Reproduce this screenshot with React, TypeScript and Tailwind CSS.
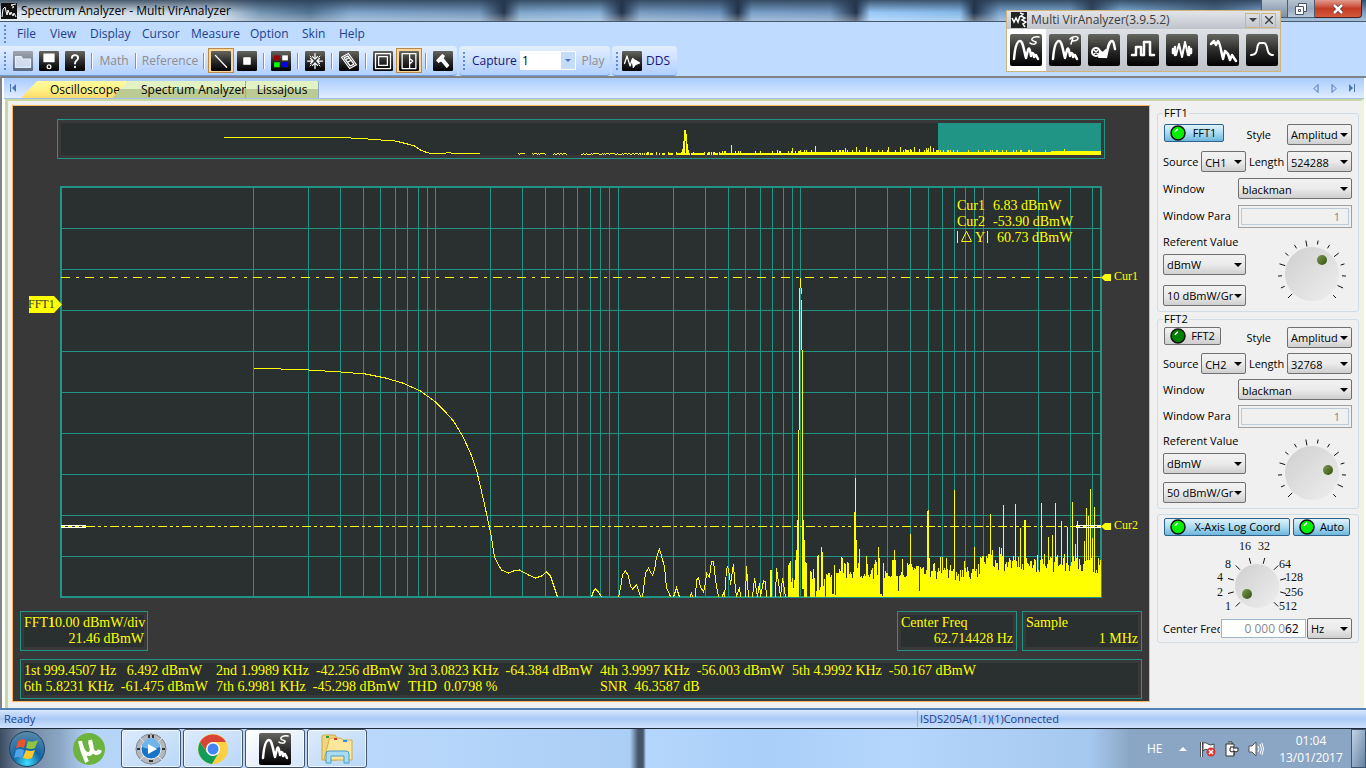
import { useState, type ReactNode } from "react";
import clsx from "clsx";

const TEAL = "#219585";
const YELLOW = "#ffff00";

/* ---------- Spectrum data ---------- */

const BASE = 597;
const LEFT = 61;
const RIGHT = 1101;

// log grid: decades start at 253 and are 182.4 wide
const gridX: number[] = [];
for (let decade = 0; decade < 5; decade++) {
  for (let m = 1; m < 10; m++) {
    const x = Math.round(253 + 182.4 * (decade + Math.log10(m)));
    if (x < RIGHT - 4) gridX.push(x);
  }
}
const gridY = [228, 269, 310, 351, 392, 433, 474, 515, 556];

const noise = (i: number) => {
  const v = Math.sin(i * 127.1 + 11.7) * 43758.5453;
  return v - Math.floor(v);
};

const spikes: Record<number, number> = {
  806: 563, 810: 571, 811: 572, 817: 556, 818: 555, 821: 547, 822: 552, 828: 573, 834: 565,
  841: 557, 842: 558, 848: 563, 854: 512, 855: 478, 856: 540, 859: 549, 866: 556, 867: 564,
  876: 562, 878: 547, 879: 558, 883: 563, 894: 550, 895: 560, 902: 559, 907: 563, 910: 534,
  927: 511, 928: 510, 929: 558, 940: 557, 942: 557, 946: 558, 953: 569, 954: 490, 964: 561,
  974: 547, 981: 558, 983: 556, 986: 556, 990: 514, 991: 555, 992: 550, 999: 547, 1001: 548,
  1003: 505, 1009: 558, 1013: 556, 1015: 504, 1020: 528, 1024: 520, 1025: 520, 1031: 561,
  1037: 555, 1041: 503, 1044: 554, 1048: 537, 1052: 535, 1055: 503, 1057: 555, 1061: 521,
  1064: 554, 1067: 527, 1072: 502, 1075: 544, 1077: 521, 1084: 541, 1086: 508, 1088: 516,
  1090: 489, 1092: 538, 1094: 507, 1098: 558,
};

const noiseTop = (x: number) => {
  if (spikes[x]) return spikes[x];
  const r = noise(x);
  const slow = noise(Math.floor(x / 4) + 500);
  if (x < 826) return r < 0.3 ? BASE : BASE - 6 - 26 * slow * r;
  if (x < 885) return slow < 0.18 ? BASE - 4 * r : BASE - 18 - 22 * slow * r;
  if (x < 925) return r < 0.08 ? BASE - 6 : BASE - 15 - 20 * slow - 4 * r;
  if (x < 980) return BASE - 13 - 16 * r - 8 * slow;
  return BASE - 22 - 10 * slow - 12 * r;
};

let noisePath = "";
for (let x = 806; x < RIGHT; x++) {
  noisePath += `M${x} ${BASE}V${Math.round(noiseTop(x))}`;
}

const miniSpikes: Record<number, number> = {
  731: 145, 777: 150, 792: 148, 815: 146, 845: 148, 856: 147, 866: 147, 870: 149, 888: 147,
  900: 147, 905: 149, 910: 149, 914: 147, 919: 149, 926: 148, 928: 148, 930: 146, 933: 148,
  1064: 149,
};
let miniPath = "";
for (let x = 508; x < RIGHT; x++) {
  const r = noise(x * 3);
  let top = 153;
  if (x < 640) top = noise(Math.floor(x / 7)) < 0.45 ? 155 : 153 + (r > 0.6 ? 1 : 0);
  else if (x < 720) top = r < 0.3 ? 154 : 153 - (r > 0.8 ? 1 : 0);
  else if (x < 800) top = r > 0.8 ? 151 : 153;
  else top = r > 0.8 ? 150 : 152;
  if (x > 1050) top = 151;
  if (miniSpikes[x]) top = miniSpikes[x];
  if (x < 640) {
    if (top < 155) miniPath += `M${x} ${top}v1`;
  } else if (top < 154 || x > 720) {
    miniPath += `M${x} 155V${top}`;
  }
}

const curve =
  "M253 368L280 369L308 370L340 372L365 374L385 378L402 383L420 391L435 402L445 412L453 421L462 436L470 453L476 470L483 500L490 532L494 557L497 563L501 570L508 573L513 571L519 570L528 575L535 578L541 576L546 572L550 576L554 588L557 597" +
  "M591 597L593 591L595 589L598 592L601 597" +
  "M618 597L620 588L622 575L625 571L628 576L630 586L632 589L636 585L638 590L640 597" +
  "M642 597L645 573L648 568L650 572L652 575L654 570L656 557L659 549L661 556L664 567L666 588L669 594L670 597" +
  "M673 597L676 588L679 597M690 597L691 592L692 597" +
  "M695 597L696 580L698 578L700 587L703 592L705 583L706 573L709 577L711 561L713 561L715 580L718 597" +
  "M722 597L723 592L724 597L726 570L727 566L729 575L730 585L731 577L733 564L734 580L736 597L739 587L740 597" +
  "M745 597L746 566L748 597M752 597L754 578L757 597L759 583L760 597L763 581L765 582L766 597" +
  "M770 597V570M771 597V570M775 597L776 568L778 582L780 597L782 578L784 590L785 597";

const peak =
  "M788 597V565M789 597V563M790 597V561M791 597V582M792 597V578M793 597V588M794 597V580M795 597V560M796 597V550M797 597V520M798 597V430M799 430V288M800 288V278M801 288V294M801 300V350M802 350V589M803 589V520M804 597V540M805 597V562";

const Plot = () => (
  <svg
    viewBox="13 106 1136 500"
    className="block w-full h-auto font-['Liberation_Serif',serif]"
    role="img"
    aria-label="Spectrum"
  >
    <g shapeRendering="crispEdges">
      {/* Overview strip */}
      <rect x="57.5" y="119.5" width="1047" height="39" fill="none" stroke={TEAL} />
      <rect x="61" y="123" width="1040" height="32" fill="#2a3030" />
      <rect x="938" y="123" width="163" height="32" fill={TEAL} />
      <g transform="translate(.5 0)" fill="none" stroke={YELLOW}>
        <path d="M223 137.5H350M350 138.500H367M367 139.500H380M380 140.500H392L399 142L407 144L414 146L420 150L425 152L430 153.500H445M445 152.500H450M450 153.500H479" />
        <path d={miniPath} />
        <path d="M682 155V149M683 155V141M684 155V130M685 141V130M686 155V134M687 155V144M688 155V150" />
      </g>

      {/* Grid */}
      <rect x={LEFT} y="187" width="1040" height="410" fill="#2a3030" />
      <g transform="translate(.5 .5)" stroke={TEAL}>
        {gridX.map((x) => (
          <line key={x} x1={x} x2={x} y1="187" y2={BASE} />
        ))}
        {gridY.map((y) => (
          <line key={y} x1={LEFT} x2={RIGHT} y1={y} y2={y} />
        ))}
      </g>
      <rect x="61" y="187" width="1040" height="410" fill="none" stroke={TEAL} strokeWidth="2" />

      {/* Traces */}
      <g transform="translate(.5 0)" fill="none" stroke={YELLOW}>
        <path d={curve} />
        <path d={peak} />
        <path d={noisePath} />
      </g>
      <path d="M788 597.500H1101" stroke={TEAL} />

      {/* Cursors */}
      <path d="M61 277.500H1101" stroke={YELLOW} strokeDasharray="9 6 3 6" />
      <path d="M86 526.500H1076" stroke={YELLOW} strokeDasharray="9 3 3 3 3 3" />
      <path d="M61 526.500H86M1076 526.500H1101" stroke={YELLOW} strokeDasharray="4 3" />
      <path d="M61 525.500H86M61 527.500H86M1076 525.500H1101M1076 527.500H1101" stroke="#fff" />
    </g>
    <path d="M1101 277.500L1105 274H1111V281H1105ZM1101 526.500L1105 523H1111V530H1105Z" fill={YELLOW} />
    <path d="M29 296H54L62 304.500L54 313H29Z" fill={YELLOW} />
    <text x="28" y="308" fontSize="12" fill="#383838">FFT1</text>
    <g fill={YELLOW} fontSize="12">
      <text x="1114" y="280">Cur1</text>
      <text x="1114" y="529">Cur2</text>
    </g>
    <g fill={YELLOW} fontSize="14">
      <text x="957" y="210">Cur1</text>
      <text x="993" y="210">6.83 dBmW</text>
      <text x="957" y="226">Cur2</text>
      <text x="993" y="226">-53.90 dBmW</text>
      <text x="975" y="242">Y</text>
      <text x="997" y="242">60.73 dBmW</text>
    </g>
    <path d="M957.500 231V243M987.500 231V243M961.500 241.500L966.500 231.500L971.500 241.500Z" fill="none" stroke={YELLOW} />
  </svg>
);

/* ---------- Icons ---------- */

const Tile = ({ size, children }: { size: "sm" | "lg"; children: ReactNode }) => (
  <svg
    viewBox="0 0 32 32"
    className={clsx("block shrink-0", size === "sm" ? "w-5 h-5" : "w-8 h-8")}
    fill="none"
    stroke="#fff"
    strokeWidth="2"
    strokeLinejoin="round"
    strokeLinecap="round"
    aria-hidden="true"
  >
    <defs>
      <linearGradient id="tile" x1="0" y1="0" x2="0" y2="1">
        <stop offset="0" stopColor="#666660" />
        <stop offset=".5" stopColor="#2c2c2c" />
        <stop offset="1" stopColor="#000" />
      </linearGradient>
    </defs>
    <rect width="32" height="32" rx="2" fill="url(#tile)" stroke="none" />
    {children}
  </svg>
);

const Wave = () => (
  <path d="M4 25C5 13 7 7 10 7C13 7 14 17 16 24L18 16C19 13 20 15 21 22C22 18 24 18 24 23L26 21L28 25" strokeWidth="2.500" />
);
const LetterS = () => <path d="M29 3C25 2 21 4 22 6S27 7 26 9S21 10 20 9" strokeWidth="1.500" />;
const LetterP = () => <path d="M24 3L22 10M21 5C23 2 29 2 29 4S26 7 23 7" strokeWidth="1.500" />;

const floatTools: { name: string; icon: ReactNode; cls: string }[] = [
  { name: "Spectrum", icon: <><Wave /><LetterS /></>, cls: "bg-white w-[39px]" },
  { name: "Power", icon: <><Wave /><LetterP /></>, cls: "w-[39px]" },
  {
    name: "Lissajous",
    icon: (
      <>
        <circle cx="8" cy="18" r="4" />
        <path d="M6 16L10 20M10 16L6 20" strokeWidth="1.500" />
        <path d="M12 17L15 19L18 16V23H11Z" fill="#fff" />
        <path d="M18 23C20 13 21 7 24 7C26 7 26 11 27 15" strokeWidth="2.500" />
      </>
    ),
    cls: "w-[39px]",
  },
  { name: "Logic", icon: <path d="M5 21H9V13H14V21H17V8H23V21H27" strokeWidth="2.500" />, cls: "w-[39px]" },
  {
    name: "Burst",
    icon: (
      <>
        <path d="M7 15V19M9 13V21M25 15V19M23 13V21" strokeWidth="2.500" />
        <path d="M10 21L13 10L16 23L19 8L22 21" />
      </>
    ),
    cls: "w-[41px]",
  },
  {
    name: "Decay",
    icon: <path d="M4 10L7 7L9 11L11 7C13 8 14 17 16 25L18 17L21 20L23 26L25 21L29 27" strokeWidth="2.500" />,
    cls: "w-[39px]",
  },
  { name: "Filter", icon: <path d="M5 21C14 21 9 10 14 9H18C23 10 19 21 27 21" />, cls: "w-[37px]" },
];

const ToolButton = ({
  label,
  active,
  dim,
  children,
}: {
  label: string;
  active?: boolean;
  dim?: boolean;
  children: ReactNode;
}) => (
  <button
    aria-label={label}
    disabled={dim}
    className={clsx(
      "w-[26px] h-[25px] flex items-center justify-center border",
      active ? "border-[#b58a4a] bg-[#fdd597]" : "border-transparent",
      dim && "opacity-50"
    )}
  >
    <Tile size="sm">{children}</Tile>
  </button>
);

const Sep = () => (
  <div className="w-2 h-4 flex justify-center">
    <div className="w-[2px] bg-[#6b95d3] border-r border-white" />
  </div>
);

const Grip = () => (
  <div className="w-[10px] flex justify-center">
    <div className="flex flex-col gap-[2px]">
      {[0, 1, 2, 3, 4].map((i) => (
        <div key={i} className="w-[2px] h-[2px] bg-[#5b8dd6]" />
      ))}
    </div>
  </div>
);

const Toolbar = () => (
  <div className="h-[30px] flex gap-[2px] text-[12px] bg-[#bfdbff]">
    <div className="flex items-center pr-px rounded-r bg-linear-to-b from-[#e3efff] to-[#b1cfff] border-b border-[#6f9dd9]">
      <Grip />
      <ToolButton label="Open" dim>
        <path d="M4 9H13L15 13H28V26H4Z" fill="#ddd" />
      </ToolButton>
      <ToolButton label="Save">
        <path d="M8 5H24V17H8Z" fill="#fff" />
        <circle cx="16" cy="25" r="3" />
      </ToolButton>
      <ToolButton label="Help">
        <path d="M11 11C11 5 21 5 21 11C21 15 16 15 16 20M16 25V26" strokeWidth="3" />
      </ToolButton>
      <Sep />
      <button disabled className="w-9 text-[#8d8d8d]">Math</button>
      <Sep />
      <button disabled className="w-[60px] text-[#8d8d8d]">Reference</button>
      <Sep />
      <ToolButton label="Line" active>
        <path d="M7 7L25 26" />
      </ToolButton>
      <ToolButton label="Dot">
        <rect x="11" y="11" width="10" height="10" fill="#fff" />
      </ToolButton>
      <Sep />
      <ToolButton label="Colors">
        <g stroke="none">
          <rect x="5" y="7" width="9" height="8" fill="#a00000" />
          <rect x="18" y="7" width="9" height="8" fill="#fff" />
          <rect x="5" y="18" width="9" height="8" fill="#0f0" />
          <rect x="18" y="18" width="9" height="8" fill="#00f" />
        </g>
      </ToolButton>
      <Sep />
      <ToolButton label="Center">
        <path d="M16 4V12M12 9L16 13L20 9M16 28V20M12 23L16 19L20 23M4 16H12M9 12L13 16L9 20M28 16H20M23 12L19 16L23 20" />
        <path d="M8 8L10 10M24 8L22 10M8 24L10 22M24 24L22 22" strokeWidth="1.500" />
      </ToolButton>
      <Sep />
      <ToolButton label="Measure">
        <path d="M4 10L15 4L28 22L17 28ZM8 11L14 8L24 21L18 24ZM12 13L16 11M15 17L19 15" />
      </ToolButton>
      <Sep />
      <ToolButton label="Full screen">
        <path d="M4 4H28V28H4ZM9 9H23V23H9Z" />
      </ToolButton>
      <ToolButton label="Side panel" active>
        <path d="M5 4H27V28H5ZM17 4V28M17 12L22 16L17 21" />
      </ToolButton>
      <Sep />
      <ToolButton label="Tools">
        <path d="M6 15L15 6L18 8L16 12L25 23L22 26L13 15L9 18Z" fill="#fff" />
      </ToolButton>
    </div>
    <div className="flex items-center pr-1 rounded bg-linear-to-b from-[#e3efff] to-[#b1cfff] border-b border-[#6f9dd9]">
      <Grip />
      <label htmlFor="capture" className="w-[51px] pl-[3px] text-[#15157a]">Capture</label>
      <div className="relative mr-1">
        <select id="capture" className="appearance-none block w-14 h-[19px] pl-[2px] bg-white text-black">
          <option>1</option>
        </select>
        <div className="absolute right-px top-px w-[14px] h-[17px] bg-[#c5dbfa] flex justify-center items-center pointer-events-none">
          <svg viewBox="0 0 6 3" className="w-[6px] h-[3px]" fill="#4b74b5"><path d="M0 0H6L3 3Z" /></svg>
        </div>
      </div>
      <button disabled className="w-6 mx-px text-[#8d8d8d]">Play</button>
    </div>
    <div className="flex items-center pr-[7px] rounded bg-linear-to-b from-[#e3efff] to-[#b1cfff] border-b border-[#6f9dd9]">
      <Grip />
      <button className="flex items-center gap-1 text-[#15157a]">
        <Tile size="sm">
          <path d="M4 20L8 8L13 24L16 14L18 22" />
          <path d="M17 12L21 15L28 19L21 22L18 26Z" fill="#fff" />
        </Tile>
        DDS
      </button>
    </div>
  </div>
);

/* ---------- Side panel ---------- */

const Select = ({ label, value, cls }: { label: string; value: string; cls: string }) => (
  <div className={clsx("relative shrink-0", cls)}>
    <select
      aria-label={label}
      className="appearance-none block w-full h-[21px] pl-[3px] whitespace-nowrap rounded-[2px] border border-[#707070] bg-linear-to-b from-[#f2f2f2] via-[#ebebeb] to-[#cfcfcf]"
    >
      <option>{value}</option>
    </select>
    <svg viewBox="0 0 8 4" className="absolute right-1 top-[9px] w-2 h-1 pointer-events-none" aria-hidden="true">
      <path d="M0 0H8L4 4Z" />
    </svg>
  </div>
);

const LedButton = ({ children, cls, initial }: { children: string; cls: string; initial: boolean }) => {
  const [on, setOn] = useState(initial);
  return (
    <button
      aria-pressed={on}
      onClick={() => setOn(!on)}
      className={clsx(
        "h-[18px] flex items-center pl-[5px] border rounded-[2px] shrink-0",
        on
          ? "border-[#2c628b] bg-linear-to-b from-[#e0f2fb] via-[#a9daf2] to-[#6db6dd]"
          : "border-[#707070] bg-linear-to-b from-[#f2f2f2] to-[#cfcfcf]",
        cls
      )}
    >
      <svg viewBox="0 0 16 16" className="w-4 h-4 shrink-0" aria-hidden="true">
        <circle cx="8" cy="8" r="7" fill={on ? "#00f000" : "#008000"} stroke="#111" strokeWidth="1.500" />
        <path d="M5 7Q6 5 8 4" stroke="#fff" strokeWidth="1.500" fill="none" />
      </svg>
      <span className="flex-1 text-center">{children}</span>
    </button>
  );
};

const Knob = ({ dotX, dotY }: { dotX: number; dotY: number }) => (
  <svg viewBox="0 0 72 66" className="w-[72px] h-[66px] mt-[5px] mr-1 shrink-0" aria-hidden="true">
    <defs>
      <linearGradient id="knob" x1="0" y1="0" x2="1" y2="1">
        <stop offset="0" stopColor="#cfcfcf" />
        <stop offset="1" stopColor="#eeeeee" />
      </linearGradient>
      <linearGradient id="dot" x1="0" y1="0" x2="1" y2="1">
        <stop offset="0" stopColor="#7c9a52" />
        <stop offset="1" stopColor="#33500f" />
      </linearGradient>
    </defs>
    {Array.from({ length: 14 }, (_, i) => {
      const a = ((-225 + (i * 270) / 13) * Math.PI) / 180;
      const inner = i % 3 === 0 ? 28 : 30;
      return (
        <line
          key={i}
          x1={36 + inner * Math.cos(a)}
          y1={37 + inner * Math.sin(a)}
          x2={36 + 34 * Math.cos(a)}
          y2={37 + 34 * Math.sin(a)}
          stroke="#111"
        />
      );
    })}
    <circle cx="36" cy="37" r="27" fill="url(#knob)" />
    <circle cx={dotX} cy={dotY} r="5" fill="url(#dot)" />
  </svg>
);

type ChannelProps = {
  name: string;
  on: boolean;
  source: string;
  length: string;
  scale: string;
  dotX: number;
  dotY: number;
  compact?: boolean;
};

const Channel = ({ name, on, source, length, scale, dotX, dotY, compact }: ChannelProps) => {
  const row = clsx("flex items-start justify-between leading-[21px]", compact ? "h-[26px]" : "h-[27px]");
  return (
    <fieldset
      className={clsx(
        "mx-[2px] pl-[5px] pr-[6px] border border-[#d0dce6] rounded-[3px] min-w-0",
        compact ? "mt-px h-[196px]" : "mt-[2px] h-[205px]"
      )}
    >
      <legend className="px-px h-3 leading-3">{name}</legend>
      <div className={clsx("flex items-start justify-between", compact ? "pt-[2px] h-7" : "pt-[5px] h-8")}>
        <LedButton cls={on ? "w-[60px] ml-px" : "w-[57px] ml-px"} initial={on}>{name}</LedButton>
        <div className="flex gap-4 items-center">
          <span>Style</span>
          <Select label={`${name} style`} value="Amplitud" cls="w-[65px]" />
        </div>
      </div>
      <div className={row}>
        <span>Source</span>
        <Select label={`${name} source`} value={source} cls="w-[45px]" />
        <span>Length</span>
        <Select label={`${name} length`} value={length} cls="w-[65px]" />
      </div>
      <div className={row}>
        <span>Window</span>
        <Select label={`${name} window`} value="blackman" cls="w-[114px]" />
      </div>
      <div className={row}>
        <label htmlFor={`${name}-para`}>Window Para</label>
        <div className="w-[114px] h-[23px] p-[2px] border border-[#a0a0a0]">
          <input
            id={`${name}-para`}
            disabled
            defaultValue="1"
            className="block w-full h-full px-2 text-right text-[#838383] border border-[#bccbd8]"
          />
        </div>
      </div>
      <div className="flex justify-between items-start">
        <div>
          <div className="h-[22px] leading-5">Referent Value</div>
          <div className={clsx("flex flex-col", compact ? "gap-2" : "gap-[10px]")}>
            <Select label={`${name} unit`} value="dBmW" cls="w-[83px]" />
            <Select label={`${name} scale`} value={scale} cls="w-[83px]" />
          </div>
        </div>
        <Knob dotX={dotX} dotY={dotY} />
      </div>
    </fieldset>
  );
};

const zoomMarks: [string, number, number][] = [
  ["1", 62, 74], ["2", 54, 60], ["4", 54, 45], ["8", 62, 32], ["16", 76, 14], ["32", 95, 14],
  ["64", 116, 32], ["128", 122, 45], ["256", 122, 60], ["512", 116, 74],
];

const AxisGroup = () => (
  <fieldset className="mx-[2px] mt-[5px] pt-[3px] pb-[3px] pl-[5px] pr-[6px] border border-[#d0dce6] rounded-[3px] min-w-0">
    <div className="flex gap-[3px] ml-px">
      <LedButton cls="w-[126px]" initial>X-Axis Log Coord</LedButton>
      <LedButton cls="w-[57px]" initial>Auto</LedButton>
    </div>
    <svg viewBox="0 0 188 82" className="block w-[188px] h-[82px] font-['Liberation_Serif',serif]" aria-label="Zoom">
      {Array.from({ length: 10 }, (_, i) => {
        const a = ((-225 + i * 30) * Math.PI) / 180;
        return (
          <line
            key={i}
            x1={94 + 24 * Math.cos(a)}
            y1={50 + 23 * Math.sin(a)}
            x2={94 + 30 * Math.cos(a)}
            y2={50 + 29 * Math.sin(a)}
            stroke="#111"
          />
        );
      })}
      <circle cx="94" cy="50" r="22" fill="url(#knob)" />
      <circle cx="84" cy="58" r="5" fill="url(#dot)" />
      {zoomMarks.map(([t, x, y]) => (
        <text key={t} x={x} y={y} fontSize="12" fill="#111">{t}</text>
      ))}
    </svg>
    <div className="flex items-center gap-px">
      <label htmlFor="center-freq" className="w-[57px] overflow-hidden whitespace-nowrap">Center Freq</label>
      <div className="flex-1 h-[19px] flex items-center justify-end pr-[6px] bg-white border border-[#9fb6cf] text-[12px] whitespace-nowrap">
        <span className="text-[#888]">0 000 0</span>
        <input id="center-freq" defaultValue="62" className="w-[14px] bg-transparent" />
      </div>
      <Select label="Frequency unit" value="Hz" cls="w-[45px]" />
    </div>
  </fieldset>
);

/* ---------- Readouts ---------- */

const Box = ({ cls, children }: { cls?: string; children: ReactNode }) => (
  <div className={clsx("border border-[#219585] p-[3px]", cls)}>
    <div className="h-8 bg-[#2a3030]">{children}</div>
  </div>
);

const peaks = [
  [
    "1st 999.4507 Hz   6.492 dBmW",
    "2nd 1.9989 KHz  -42.256 dBmW",
    "3rd 3.0823 KHz  -64.384 dBmW",
    "4th 3.9997 KHz  -56.003 dBmW",
    "5th 4.9992 KHz  -50.167 dBmW",
  ],
  ["6th 5.8231 KHz  -61.475 dBmW", "7th 6.9981 KHz  -45.298 dBmW", "THD  0.0798 %", "SNR  46.3587 dB", ""],
];

const Readouts = () => (
  <div className="px-[7px] pt-[5px] pb-[2px] flex flex-col gap-2 text-[14px] leading-4 text-[#ffff00] font-['Liberation_Serif',serif]">
    <div className="flex gap-[5px]">
      <Box cls="w-32">
        <div className="flex justify-between whitespace-nowrap">
          <span className="w-6">FFT1</span>
          <span>10.00 dBmW/div</span>
        </div>
        <p className="text-right">21.46 dBmW</p>
      </Box>
      <Box cls="w-[120px] ml-auto">
        <p>Center Freq</p>
        <p className="text-right">62.714428 Hz</p>
      </Box>
      <Box cls="w-[120px]">
        <p>Sample</p>
        <p className="text-right">1 MHz</p>
      </Box>
    </div>
    <Box>
      <table className="table-fixed w-[960px] border-collapse">
        <tbody>
          {peaks.map((row, i) => (
            <tr key={i}>
              {row.map((cell, j) => (
                <td key={j} className="w-48 p-0 whitespace-pre">{cell}</td>
              ))}
            </tr>
          ))}
        </tbody>
      </table>
    </Box>
  </div>
);

/* ---------- Window chrome ---------- */

const TitleBar = () => (
  <header className="h-[22px] flex items-center pl-px border-b border-[#47586c] text-[12px] text-black bg-[linear-gradient(to_bottom,#25384dcc,transparent_60%,#ffffff55),linear-gradient(to_right,#dce6ef_0,#c6d6e4_220px,#7595b4_260px,#527393_310px,#7fa5ca_350px,#7396bb_480px,#24364c_504px,#80a7cc_520px,#86aed5_600px,#21324a_622px,#789cc0_640px,#6b91bb_720px,#1f3148_738px,#7aa0c9_752px,#7398c0_830px,#213249_856px,#98c9f8_870px,#86b9e8_960px,#203249_974px,#7ba6d0_1000px,#7ba6d0_1070px,#33475e_1092px,#86b6e2_1120px,#4e6a87_1215px,#78a0c8_1260px)]">
    <svg viewBox="0 0 16 16" className="w-4 h-4 mr-1" fill="none" stroke="#fff" aria-hidden="true">
      <rect width="16" height="16" fill="#111" stroke="none" />
      <path d="M1 14L2 6L4 4L6 12L7 7L9 12L10 9L12 13L13 10L15 14M11 5L13 4L10 2L15 1" />
    </svg>
    <h1>Spectrum Analyzer - Multi VirAnalyzer</h1>
    <div className="ml-auto mr-1 h-full flex">
      <button aria-label="Minimize" className="w-[27px] h-[18px] border border-t-0 border-[#4b5b70] rounded-bl bg-linear-to-b from-[#b7c3d0] to-[#7c8fa5]" />
      <button aria-label="Restore" className="w-[27px] h-[18px] flex items-center justify-center border border-l-0 border-t-0 border-[#4b5b70] bg-linear-to-b from-[#b7c3d0] via-[#9aa9bb] to-[#b4c6d8]">
        <svg viewBox="0 0 12 12" className="w-3 h-3" fill="#fff" stroke="#46566b" aria-hidden="true">
          <path d="M3.500 .5H11.500V8.500H3.500Z" />
          <path d="M.5 3.500H8.500V11.500H.5ZM3.500 6.500H5.500V8.500H3.500Z" fillRule="evenodd" />
        </svg>
      </button>
      <button aria-label="Close" className="w-[47px] h-[18px] flex items-center justify-center border border-l-0 border-t-0 border-[#4b2020] rounded-br bg-linear-to-b from-[#e09a8c] via-[#c33c22] to-[#d4593d]">
        <svg viewBox="0 0 12 10" className="w-3 h-[10px]" aria-hidden="true">
          <path d="M2 1L10 9M10 1L2 9" stroke="#593030" strokeWidth="4" />
          <path d="M2 1L10 9M10 1L2 9" stroke="#fff" strokeWidth="2.500" />
        </svg>
      </button>
    </div>
  </header>
);

const FloatingPalette = () => (
  <section className="absolute right-[85px] top-[10px] w-[275px] h-[62px] flex flex-col border border-[#d2b477] bg-linear-to-b from-[#eceef0] to-[#bfc3ca]">
    <div className="h-[18px] pl-1 pr-1 flex items-center text-[12px] text-[#3b3b3b] bg-linear-to-b from-[#e3e5e8] to-[#bfc3ca]">
      <svg viewBox="0 0 16 16" className="w-4 h-4 mr-1" fill="none" stroke="#fff" strokeWidth="1.500" aria-hidden="true">
        <rect width="16" height="16" fill="#222" stroke="none" />
        <path d="M1 6L3 10L5 6L7 10L9 4M9 1L12 2L10 4L14 6L11 8L15 10L12 12L14 15" />
      </svg>
      <span className="flex-1">Multi VirAnalyzer(3.9.5.2)</span>
      <button aria-label="Palette menu" className="w-[15px] h-[15px] mr-px flex items-center justify-center border border-[#d2b477]">
        <svg viewBox="0 0 8 4" className="w-2 h-1"><path d="M0 0H8L4 4Z" fill="#444" /></svg>
      </button>
      <button aria-label="Close palette" className="w-[15px] h-[15px] flex items-center justify-center border border-[#d2b477]">
        <svg viewBox="0 0 8 8" className="w-2 h-2" stroke="#444" strokeWidth="1.500"><path d="M0 0L8 8M8 0L0 8" /></svg>
      </button>
    </div>
    <div className="flex-1 flex">
      {floatTools.map((t) => (
        <button key={t.name} aria-label={t.name} className={clsx("pl-[3px] flex items-center", t.cls)}>
          <Tile size="lg">{t.icon}</Tile>
        </button>
      ))}
    </div>
  </section>
);

const menus = [
  ["File", "w-[33px]"], ["View", "w-10"], ["Display", "w-[52px]"], ["Cursor", "w-[49px]"],
  ["Measure", "w-[59px]"], ["Option", "w-[52px]"], ["Skin", "w-[37px]"], ["Help", "w-10"],
];

const Tabs = () => (
  <nav className="h-[21px] flex items-end text-[12px] text-black whitespace-nowrap bg-linear-to-b from-[#a9ccff] to-[#e0edff] border-b border-[#a3c0e8]">
    <button aria-label="First tab" className="w-[17px] h-full flex justify-center items-center">
      <svg viewBox="0 0 8 8" className="w-2 h-2" fill="#4b74b5"><path d="M1 0H2V8H1ZM7 0V8L3 4Z" /></svg>
    </button>
    <button className="h-[17px] w-[106px] leading-4 pl-[29px] text-left bg-linear-to-b from-[#fffba0] via-[#fff283] via-50% to-[#ffd86c] [clip-path:polygon(16px_0,100%_0,100%_100%,0_100%)]">
      Oscilloscope
    </button>
    <button className="h-[17px] w-[134px] -ml-[15px] leading-4 pl-[29px] text-left border-r border-[#8ba7c9] bg-linear-to-b from-[#e2f2c3] from-45% to-[#bccb94] to-50% [clip-path:polygon(16px_0,100%_0,100%_100%,0_100%)]">
      Spectrum Analyzer
    </button>
    <button className="h-[17px] w-[73px] leading-4 text-center border-r border-[#8ba7c9] rounded-t-[2px] bg-linear-to-b from-[#e2f2c3] from-45% to-[#bccb94] to-50%">
      Lissajous
    </button>
    <div className="ml-auto mr-2 h-full flex items-center gap-[10px]">
      <button aria-label="Previous tab">
        <svg viewBox="0 0 8 9" className="w-2 h-[9px]" fill="none" stroke="#4b74b5"><path d="M6 .5V8.500L2 4.500Z" /></svg>
      </button>
      <button aria-label="Next tab">
        <svg viewBox="0 0 8 9" className="w-2 h-[9px]" fill="none" stroke="#4b74b5"><path d="M2 .5V8.500L6 4.500Z" /></svg>
      </button>
      <button aria-label="Last tab">
        <svg viewBox="0 0 8 8" className="w-2 h-2" fill="#4b74b5"><path d="M6 0H7V8H6ZM1 0V8L5 4Z" /></svg>
      </button>
    </div>
  </nav>
);

const TaskButton = ({ label, active, children }: { label: string; active?: boolean; children: ReactNode }) => (
  <button
    aria-label={label}
    className={clsx(
      "w-[60px] h-[39px] flex items-center justify-center border border-[#44546a] rounded-[3px] inset-ring inset-ring-white/70",
      active ? "bg-linear-to-br from-[#ffffff] to-[#d5e6fa]" : "bg-linear-to-br from-[#dcebfb] to-[#b9d7f8]"
    )}
  >
    {children}
  </button>
);

const Taskbar = () => (
  <footer className="h-10 flex items-center text-white border-t border-[#1c2a3a] bg-[linear-gradient(to_right,#3c4c61_0,#6f839b_20px,#8ba6c4_60px,#b5d4f8_90px,#b9d8fb_380px,#abcef6_630px,#46566a_638px,#46566a_643px,#b5d6fc_646px,#a9cff9_760px,#b5d6fc_900px,#a5c8ee_1090px,#8ba6c4_1130px,#8ba6c4_100%)]">
    <button aria-label="Start" className="ml-2">
      <svg viewBox="0 0 38 38" className="w-[38px] h-[38px]" aria-hidden="true">
        <defs>
          <radialGradient id="orb" cx=".5" cy=".9" r=".9">
            <stop offset="0" stopColor="#3ce0ff" />
            <stop offset=".45" stopColor="#1465a5" />
            <stop offset="1" stopColor="#5d8aa8" />
          </radialGradient>
        </defs>
        <circle cx="19" cy="19" r="17.500" fill="url(#orb)" stroke="#17415f" />
        <path d="M10 11Q14 8 18 10L16 18Q12 16 8 18Z" fill="#e8562b" />
        <path d="M20 11Q25 13 30 10L27 18Q23 20 18 18Z" fill="#8fc640" />
        <path d="M8 20Q12 18 16 20L14 28Q10 26 6 28Z" fill="#4fa3e8" />
        <path d="M18 20Q22 22 27 20L24 28Q20 30 15 28Z" fill="#fbc82e" />
      </svg>
    </button>
    <button aria-label="uTorrent" className="ml-[27px] mr-4">
      <svg viewBox="0 0 32 32" className="w-8 h-8" aria-hidden="true">
        <circle cx="16" cy="16" r="16" fill="#6cb33f" />
        <path d="M7 8Q9 19 14 29M8 12Q11 22 16 21Q21 20 17 7M17 9Q19 20 23 20Q26 20 27 17" fill="none" stroke="#fff" strokeWidth="4" />
      </svg>
    </button>
    <div className="flex gap-[2px]">
      <TaskButton label="Media Player">
        <svg viewBox="0 0 32 32" className="w-8 h-8" aria-hidden="true">
          <circle cx="16" cy="16" r="15" fill="#b4b7bb" stroke="#81858b" />
          <path d="M5 5L27 27M27 5L5 27" stroke="#e5e5e5" />
          <path d="M14 2V5M18 2V5M14 28H18M2 16H5M27 16H30" stroke="#333" strokeWidth="2" />
          <circle cx="16" cy="16" r="10" fill="#1675c9" stroke="#e6edf5" />
          <path d="M7 14A9 9 0 0 1 25 14Q16 18 7 14" fill="#6fb5ea" />
          <path d="M13 11L22 16L13 21Z" fill="#fff" />
        </svg>
      </TaskButton>
      <TaskButton label="Chrome">
        <svg viewBox="0 0 30 30" className="w-[30px] h-[30px]" aria-hidden="true">
          <circle cx="15" cy="15" r="15" fill="#fbd043" />
          <path d="M2 8A15 15 0 0 1 28 8H15L9 18Z" fill="#da4437" />
          <path d="M2 8A15 15 0 0 0 14 30L21 18L9 18.500Z" fill="#109d58" />
          <circle cx="15" cy="15" r="7" fill="#fff" />
          <circle cx="15" cy="15" r="5.500" fill="#4285f4" />
        </svg>
      </TaskButton>
      <TaskButton label="Multi VirAnalyzer" active>
        <Tile size="lg"><Wave /><LetterS /></Tile>
      </TaskButton>
      <TaskButton label="Explorer">
        <svg viewBox="0 0 32 30" className="w-8 h-[30px]" aria-hidden="true">
          <path d="M1 3Q1 1 3 1H14L16 4V26H1Z" fill="#f0d77d" stroke="#c9a945" />
          <path d="M8 6Q8 4 10 4H20L22 6H31V26H3Z" fill="#fae79c" stroke="#cfae4c" />
          <path d="M5 3H8" stroke="#2a9a3c" strokeWidth="2" />
          <path d="M13 5H16" stroke="#d33" strokeWidth="2" />
          <path d="M22 7H26" stroke="#38e" strokeWidth="2" />
          <path d="M5 29V20Q5 17 8 17H25Q28 17 28 20V29H23V22H10V29Z" fill="#a8dcf2" stroke="#4d9cc5" />
        </svg>
      </TaskButton>
    </div>
    <div className="ml-auto flex items-center text-[12px]">
      <span className="w-8">HE</span>
      <svg viewBox="0 0 8 4" className="w-2 h-1 mr-[13px]" fill="#fff" aria-hidden="true"><path d="M0 4L4 0L8 4Z" /></svg>
      <svg viewBox="0 0 16 16" className="w-4 h-4 mr-2" aria-hidden="true">
        <path d="M1.500 1V16" stroke="#333" strokeWidth="2.500" />
        <path d="M1.500 1V16" stroke="#fff" />
        <path d="M3 2Q6 1 8 3T14 3V10Q11 11 8 9T3 10Z" fill="#fff" stroke="#444" />
        <circle cx="11" cy="11" r="4.500" fill="#d33" />
        <path d="M9 9L13 13M13 9L9 13" stroke="#fff" strokeWidth="1.500" />
      </svg>
      <svg viewBox="0 0 16 16" className="w-4 h-4 mr-2" fill="none" stroke="#333" aria-hidden="true">
        <path d="M2 3H10V15H2ZM4 1H8V3" fill="#fff" />
        <path d="M7 5V7H6V10Q8 12 10 10V14M9 5V7H14V10Q12 12 10 10" fill="#fff" stroke="#222" />
      </svg>
      <svg viewBox="0 0 16 16" className="w-4 h-4" fill="none" stroke="#fff" aria-hidden="true">
        <path d="M1 5H4L8 1V15L4 11H1Z" fill="#fff" stroke="#555" />
        <path d="M10 5Q12 8 10 11M12 3Q15 8 12 13M14 2Q17 8 14 14" />
      </svg>
      <div className="w-20 ml-[7px] text-center leading-[17px]">
        <p>01:04</p>
        <p>13/01/2017</p>
      </div>
      <button aria-label="Show desktop" className="w-[15px] h-[39px] border border-[#3e5570] bg-linear-to-br from-[#c4d4e5] to-[#6582a3]" />
    </div>
  </footer>
);

const App = () => (
  <div className="relative min-h-screen flex flex-col overflow-hidden bg-[#bfdbff] font-['Open_Sans',sans-serif]">
    <TitleBar />
    <nav className="h-6 flex items-center text-[12px] text-[#1c3f8f]">
      <Grip />
      {menus.map(([name, width]) => (
        <button key={name} className={clsx("text-left pl-[7px]", width)}>{name}</button>
      ))}
    </nav>
    <Toolbar />
    <FloatingPalette />
    <main className="flex-1 flex flex-col border-t-2 border-l-2 border-[#808489] bg-white pl-[2px] pr-[2px]">
      <Tabs />
      <div className="flex-1 flex ml-px border-t-2 border-x-3 border-[#c8d8a4] border-r-[#eef7cf] bg-[#f0f0f0] pt-1 pl-1">
        <div className="flex-1 min-w-0 self-start border border-[#fdb45c] bg-[#383838]">
          <Plot />
          <Readouts />
        </div>
        <aside className="w-[211px] shrink-0 pl-[5px] text-[11px] leading-[14px] text-black">
          <Channel name="FFT1" on source="CH1" length="524288" scale="10 dBmW/Gr" dotX={46} dotY={23} />
          <Channel
            name="FFT2"
            on={false}
            source="CH2"
            length="32768"
            scale="50 dBmW/Gr"
            dotX={52}
            dotY={34}
            compact
          />
          <AxisGroup />
        </aside>
      </div>
    </main>
    <div className="h-5 border-t-2 border-[#5480b8] flex items-center text-[11px] text-[#1c3f8f] bg-linear-to-b from-[#d6e6fc] via-[#aac9f5] to-[#cfe2fd]">
      <span className="flex-1 pl-1">Ready</span>
      <span className="w-[449px] pl-[2px] border-l border-[#8fb2e0]">ISDS205A(1.1)(1)Connected</span>
    </div>
    <Taskbar />
  </div>
);

export default App;
